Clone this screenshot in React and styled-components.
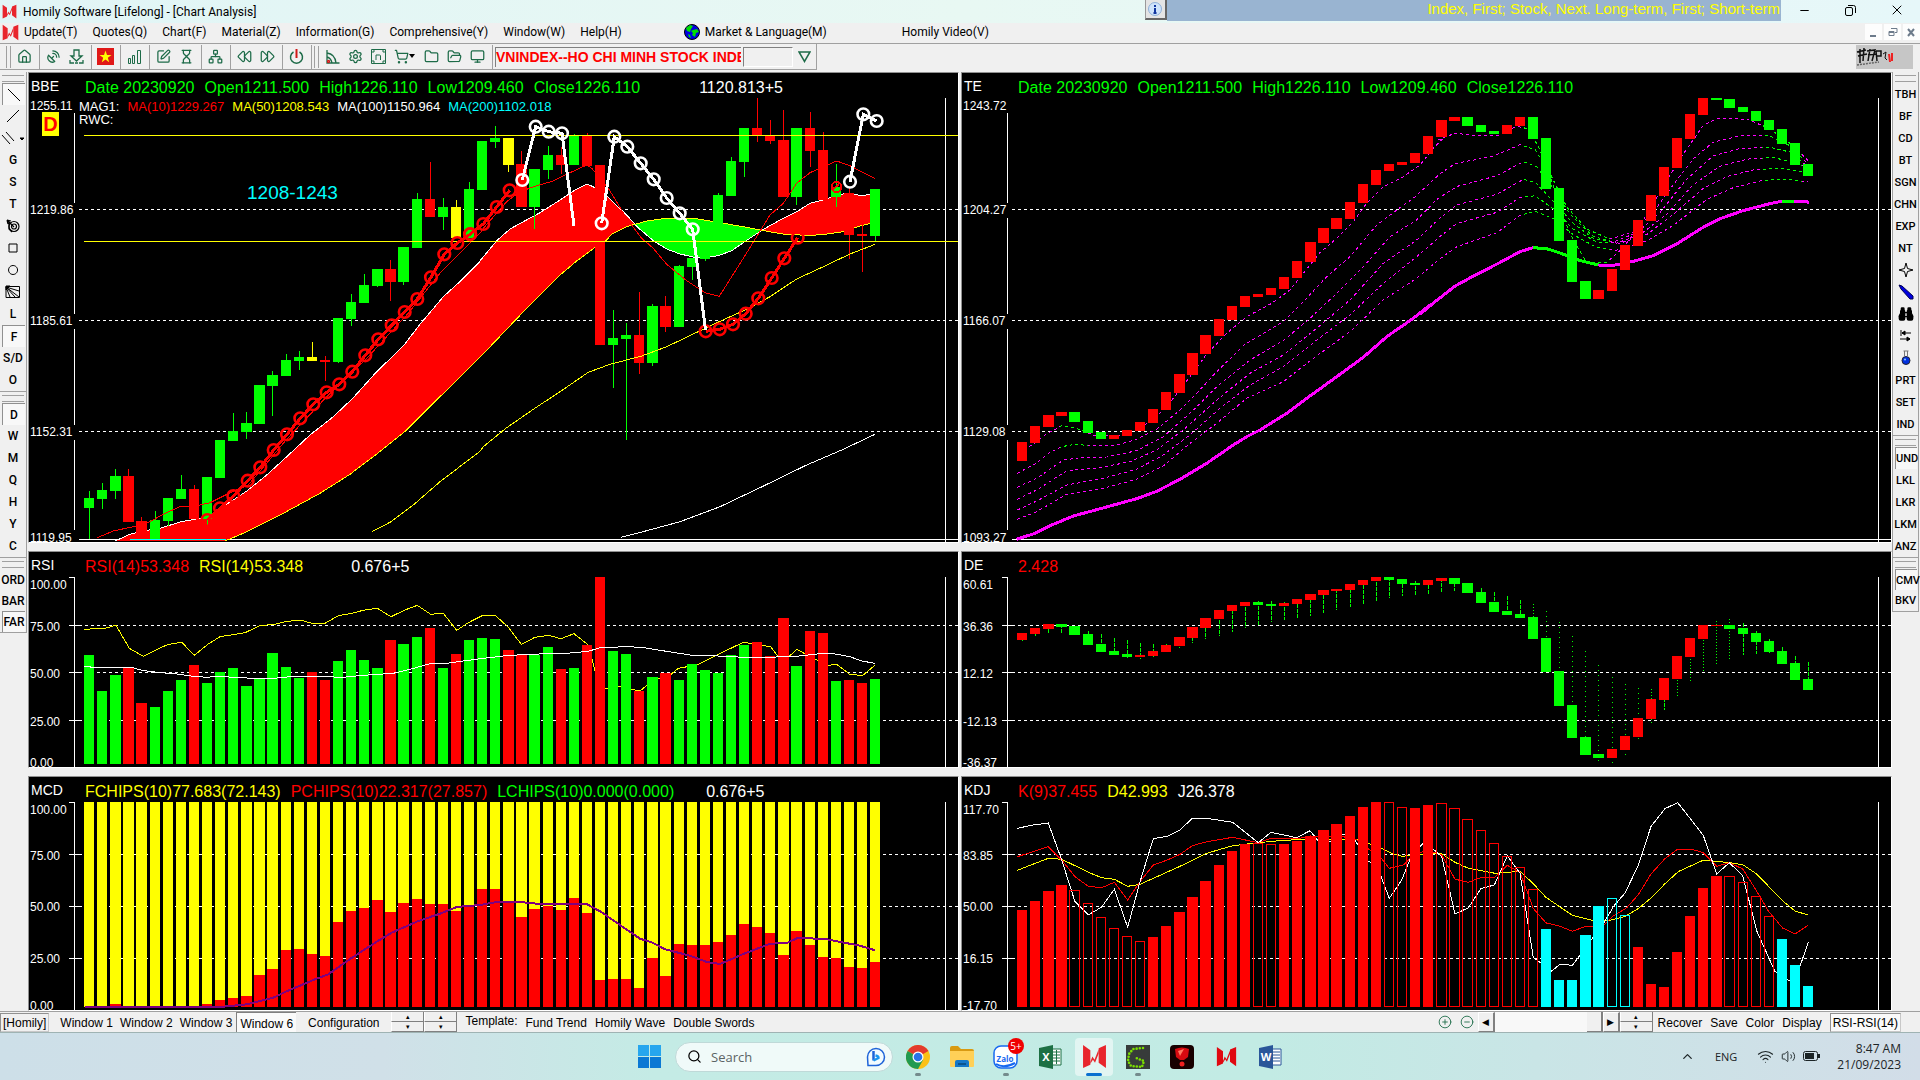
import styled, { createGlobalStyle, css } from 'styled-components';
import {
  Home,
  SatelliteDish,
  SquarePen,
  Hourglass,
  Network,
  Rewind,
  FastForward,
  Settings,
  ShoppingCart,
  Folder,
  FolderOpen,
  Monitor,
  CirclePlus,
  CircleMinus,
  ChevronUp,
  Wifi,
  Volume2,
  Search,
  Minus,
  X,
  Binoculars,
} from 'lucide-react';

const RED = '#ff0000';
const GREEN = '#00ff00';
const YELLOW = '#ffff00';
const CYAN = '#00ffff';
const MAGENTA = '#ff00ff';
const ICON = '#1d6b48';

const ARIAL = "'Liberation Sans', Arial, sans-serif";
const UI = "Roboto, 'Segoe UI', sans-serif";

const GlobalStyle = createGlobalStyle`
  * {
    box-sizing: border-box;
  }
  body {
    margin: 0;
    background: #f0f0f0;
    font-family: ${ARIAL};
    font-size: 12px;
    color: #000;
    overflow: hidden;
  }
  button, input {
    font: inherit;
    color: inherit;
    border: none;
    border-radius: 0;
    background: none;
    padding: 0;
    margin: 0;
    outline: none;
  }
`;

/* ---------- shell ---------- */

const Shell = styled.div`
  display: flex;
  flex-direction: column;
  height: 100vh;
`;

const TitleBar = styled.header`
  display: flex;
  height: 23px;
  flex: none;
  align-items: flex-start;
  background: linear-gradient(90deg, #e1f5f6, #e8f8f3 50%, #e6f7f9);
  font-family: ${UI};
`;

const TitleText = styled.div`
  display: flex;
  align-items: center;
  gap: 6px;
  height: 23px;
  padding-left: 2px;
  flex: 1;
`;

const InfoButton = styled.button`
  display: grid;
  place-items: center;
  width: 22px;
  height: 20px;
  background: #e4e4e4;
  border-right: 2px solid #666;
  border-bottom: 2px solid #666;
  border-left: 1px solid #999;
`;

const Ticker = styled.div`
  width: 32%;
  height: 21px;
  line-height: 17px;
  text-align: right;
  background: #99b4d1;
  color: ${YELLOW};
  font-family: ${ARIAL};
  font-size: 15px;
  padding-right: 1px;
  white-space: nowrap;
`;

const WindowButtons = styled.div`
  display: flex;
  width: 139px;
  height: 20px;
`;

const WindowButton = styled.button`
  flex: 1;
  display: grid;
  place-items: center;
`;

const MenuBar = styled.nav`
  display: flex;
  align-items: center;
  gap: 15px;
  height: 21px;
  flex: none;
  padding: 0 0 2px 2px;
  border-bottom: 1px solid #a0a0a0;
  font-family: ${UI};
`;

const MenuItem = styled.button`
  display: flex;
  align-items: center;
  gap: 5px;
  height: 18px;
  margin-left: ${({ $space }) => $space || 0}px;
  white-space: nowrap;
`;

const MdiButtons = styled.div`
  display: flex;
  gap: 2px;
  margin-left: auto;
`;

const MdiButton = styled.button`
  width: 17px;
  height: 16px;
  display: grid;
  place-items: center;
  background: #fdfdfd;
  color: #6d7b8b;
`;

/* ---------- top tool bar ---------- */

const ToolRow = styled.div`
  display: flex;
  justify-content: space-between;
  height: 28px;
  flex: none;
  padding-right: 7px;
`;

const ToolBar = styled.div`
  display: flex;
  align-items: center;
  height: 26px;
  padding-left: 6px;
  border-right: 1px solid #a0a0a0;
  border-bottom: 1px solid #a0a0a0;
  color: ${ICON};
`;

const Grip = styled.span`
  width: 5px;
  height: 22px;
  margin-right: 2px;
  border-left: 1px solid #a0a0a0;
  border-right: 1px solid #a0a0a0;
`;

const Divider = styled.span`
  width: 1px;
  height: 24px;
  margin: 0 2px 0 3px;
  background: #a0a0a0;
`;

const Tool = styled.button`
  display: flex;
  align-items: center;
  justify-content: center;
  width: ${({ $wide }) => ($wide ? 30 : 23)}px;
  height: 22px;
`;

const SymbolInput = styled.input`
  width: 246px;
  height: 20px;
  border-left: 1px solid #808080;
  border-top: 1px solid #808080;
  color: ${RED};
  font-size: 14px;
  font-weight: 700;
`;

const CodeInput = styled.input`
  width: 50px;
  height: 20px;
  margin-left: 2px;
  border: 1px solid #fff;
  border-left-color: #808080;
  border-top-color: #808080;
`;

const Brand = styled.svg`
  width: 57px;
  height: 24px;
  margin-top: 1px;
  background: #c6c6c6;
`;

/* ---------- side tool bars ---------- */

const Workspace = styled.main`
  display: grid;
  grid-template-columns: 28px 1fr 28px;
  flex: 1;
  min-height: 0;
`;

const Side = styled.aside`
  display: flex;
  flex-direction: column;
  padding-right: 1px;
  font-family: ${UI};
  font-weight: 500;
  font-size: ${({ $size }) => $size}px;
  overflow: hidden;
`;

const SideButton = styled.button`
  display: grid;
  place-items: center;
  width: 100%;
  height: 22px;
  white-space: nowrap;
  ${({ $on }) =>
    $on &&
    css`
      margin-left: 2px;
      width: calc(100% - 3px);
      background: #f8f8f8;
      border-left: 1px solid #909090;
      border-top: 1px solid #909090;
    `}
`;

const SideGroup = styled.div`
  padding-top: 3px;
  border-right: 1px solid #a0a0a0;
  border-bottom: 1px solid #a0a0a0;
  border-left: ${({ $left }) => ($left ? '1px solid #a0a0a0' : 'none')};

  &::before {
    content: '';
    display: block;
    height: 5px;
    margin: 0 2px 1px;
    border-top: 1px solid #a0a0a0;
    border-bottom: 1px solid #a0a0a0;
  }

  &:last-child ${SideButton} {
    height: 21px;
  }
`;

/* ---------- chart panes ---------- */

const Panes = styled.div`
  display: grid;
  grid-template-columns: 1fr 1fr;
  grid-template-rows: 471fr 217fr 235fr;
  gap: 8px 2px;
  min-width: 0;
  min-height: 0;
`;

const PaneBox = styled.section`
  position: relative;
  overflow: hidden;
  min-height: 0;
  background: #000;
  border: 1px solid #fff;
  border-top-color: #909090;
  border-left-color: #909090;
  color: #fff;
`;

const Plot = styled.svg`
  position: absolute;
  inset: 0;
  width: 100%;
  height: 100%;
`;

const PaneHead = styled.div`
  position: relative;
  display: flex;
  align-items: center;
  gap: 10px;
  height: 30px;
  margin-bottom: -3px;
  padding-left: 2px;
  font-size: 16px;
  white-space: nowrap;
`;

const PaneName = styled.h2`
  width: 44px;
  margin: 0;
  padding-bottom: 4px;
  font-size: 14px;
  font-weight: 400;
`;

const Reading = styled.span`
  color: ${({ $color }) => $color || '#fff'};
  margin-left: ${({ $space }) => $space || 0}px;
`;

const SubHead = styled.div`
  position: relative;
  display: flex;
  gap: 8px;
  height: 13px;
  line-height: 13px;
  padding-left: 50px;
  font-size: 13px;
  white-space: nowrap;
`;

const Axis = styled.div`
  position: absolute;
  top: 0;
  bottom: 0;
  left: 1px;
  display: grid;
  grid-template-rows: ${({ $rows }) => $rows} 11px;
  padding-top: 26px;
  font-size: 12px;
  line-height: 14px;
`;

const PeriodBadge = styled.span`
  position: absolute;
  left: 13px;
  top: 39px;
  width: 17px;
  height: 24px;
  line-height: 24px;
  text-align: center;
  background: ${YELLOW};
  color: ${RED};
  font-size: 20px;
  font-weight: 700;
`;

const RangeNote = styled.span`
  position: absolute;
  left: 218px;
  top: 109px;
  color: ${CYAN};
  font-size: 19px;
  line-height: 22px;
`;

const AXIS_ROWS = {
  469: '104fr 111fr 111fr 106fr',
  215: '42fr 47fr 48fr 41fr',
  233: '46fr 51fr 52fr 47fr',
};

const GRID = {
  469: [136, 247, 358],
  215: [73, 120, 168],
  233: [77, 129, 181],
};

/* ---------- plot helpers ---------- */

// bars are spaced 13.1px apart and snapped to whole pixels
const left = (i) => Math.round(55 + 13.1 * i);
const width = (i) => Math.round(65.3 + 13.1 * i) - left(i);
const middle = (i) => left(i) + 5;

// each part: x shift, y shift, y divisor, 'x,y x,y ...'
const trace = (parts) =>
  parts
    .flatMap(([dx, dy, k, text]) =>
      text.split(' ').map((p) => {
        const [x, y] = p.split(',').map(Number);
        return `${(x / 3 + dx).toFixed(1)},${(y / k + dy).toFixed(1)}`;
      })
    )
    .join(' ');

// 'color top bottom high low'
const parseCandles = (dy, k, text) =>
  text.split('|').map((row) => {
    const [c, ...n] = row.split(' ');
    const [top, bottom, high = top, low = bottom] = n.map(Number);
    return [c, top, bottom, high, low].map((v, i) =>
      i ? Math.round(v / k + dy) : v
    );
  });

const TONE = { r: RED, g: GREEN, y: YELLOW };

const Candles = ({ rows, stem }) =>
  rows.map(([c, top, bottom, high, low], i) => (
    <g key={i} fill={TONE[c]}>
      {stem ? (
        <line
          x1={middle(i) + 0.5}
          x2={middle(i) + 0.5}
          y1={high}
          y2={low}
          stroke={GREEN}
          strokeDasharray={low - high > 50 ? '1 4' : low - high > 32 ? '1 2' : '4 1'}
        />
      ) : (
        <rect x={middle(i)} width='1' y={high} height={low - high} />
      )}
      <rect x={left(i)} width={width(i)} y={top} height={Math.max(1, bottom - top)} />
    </g>
  ));

const Line = ({ points, color, w = 1, dash }) => (
  <polyline
    points={points}
    fill='none'
    stroke={color}
    strokeWidth={w}
    strokeDasharray={dash}
  />
);

const Frame = ({ h }) => (
  <g stroke='#fff' fill='none'>
    {GRID[h].map((y) => (
      <g key={y}>
        <line x1='50' x2='929' y1={y + 0.5} y2={y + 0.5} strokeDasharray='3 3' />
        {h !== 469 && <line x1='40' x2='50' y1={y + 0.5} y2={y + 0.5} />}
      </g>
    ))}
    {h === 469 ? (
      <>
        <path d='M45.5 40V130M45.5 145V241M45.5 256V352M45.5 367V457' />
        <path d='M50 466.5H929' />
      </>
    ) : (
      <path d={`M40 25.5H45.5V${h}`} />
    )}
    <path d={`M916.5 25V${h}`} />
  </g>
);

const Pane = ({ name, h, ticks, head, sub, children, overlay }) => (
  <PaneBox aria-label={name}>
    <Plot
      viewBox={`0 0 929 ${h}`}
      preserveAspectRatio='none'
      shapeRendering='crispEdges'
    >
      <Frame h={h} />
      {children}
    </Plot>
    <PaneHead>
      <PaneName>{name}</PaneName>
      {head.map(([text, color, space]) => (
        <Reading key={text + color} $color={color} $space={space}>
          {text}
        </Reading>
      ))}
    </PaneHead>
    {sub}
    <Axis $rows={AXIS_ROWS[h]}>
      {ticks.map((t) => (
        <span key={t}>{t}</span>
      ))}
    </Axis>
    {overlay}
  </PaneBox>
);

/* ---------- BBE data ---------- */

const bbeCandles = [
  ...parseCandles(
    -13,
    3,
    'g 1313 1344 1292 1437|g 1290 1316 1269 1347|g 1248 1293 1227 1316|r 1248 1386 1227 1386|r 1383 1437 1371|g 1380 1438 1353|g 1314 1383 1314 1398|g 1287 1316 1245|r 1287 1377 1275|g 1251 1377 1251 1400|g 1140 1254|g 1113 1143 1059|g 1089 1116 1056 1137|g 975 1092|g 945 978 933 1068|g 900 948 882|g 891 903 873 930|y 891 903 846|r 900 906 888 963|g 774 906 774 909|g 726 777 702 798|g 675 729 642|g 627 678 627 681|r 627 666 600 723|g 561 666 561 675|g 417 564 399|r 417 471 306|g 441 471 414 510|y 441 534 420'
  ),
  ...parseCandles(
    -3,
    3,
    'g 357 504 336|g 213 360|g 204 216 168 234|y 204 285 204 306|r 282 411 243|g 297 411 297 477|g 255 300 228 327|r 255 285 231 312|g 195 285 192|r 195 288 189|r 285 825|g 804 825 720 954|g 795 807 759 1110|r 795 879 666 912|g 708 879 702 888|r 708 771 678 786|g 588 771 585|g 564 591 564 630|g 460 567 460 572|g 375 462 369|g 273 378 261|g 174 276 174 321|r 174 195 84 216|r 195 213 150 222|r 210 381 120|g 174 381 174 405|r 174 243 126 291|r 240 390 186|g 350 381 282 411|r 370 495 350 567|r 492 498 465 606|g 357 498 357 513'
  ),
];

const fastEdge =
  '345,1443 385,1425 420,1414 480,1405 540,1386 600,1375 630,1365 680,1333 740,1293 800,1245 860,1190 930,1125 1000,1070 1060,1013 1130,935 1210,858 1260,793 1330,710 1385,660 1440,605';
const slowEdge =
  '675,1443 730,1420 850,1360 960,1300 1050,1243 1130,1182 1220,1110 1320,1010 1440,892';
const fastRise =
  '40,597 110,512 150,477 190,455 240,428 300,390 345,360 382,342 405,353 440,378 500,435 525,463';
const slowRise =
  '100,820 200,715 300,615 350,573 405,532 440,510 455,492 500,470 525,463';
const fastDip =
  '525,463 540,478 580,512 620,537 660,552 700,561 730,564 775,557 815,542 850,518 905,481';
const slowDip =
  '525,463 560,453 620,445 700,445 780,458 850,470 905,481';
const fastEnd =
  '905,481 960,450 1010,425 1050,400 1090,390 1130,375 1165,370 1200,376 1240,374';
const slowEnd =
  '905,481 980,494 1060,496 1100,492 1150,485 1200,468 1240,458';

const backwards = (text) => text.split(' ').reverse().join(' ');

const band = (top, low) =>
  `${trace(top)} ${backwards(trace(low))}`;

const sarRise = trace([
  [-29, -13, 3, '622,1380 660,1345 700,1308 743,1262 781,1222 821,1170 861,1123 901,1075 940,1033 980,997 1018,973 1057,935 1096,886 1135,838 1175,796 1214,756 1252,717 1293,652 1333,583 1372,549 1410,523'],
  [431, -3, 3, '31,492 70,462 110,411 149,361'],
]);
const sarTop = trace([[431, -3, 3, '187,330 227,170 266,185 306,190']]);
const sarFall = trace([
  [431, -3, 3, '425,460 463,200 502,230 542,280 581,328 620,384 659,430 698,478'],
]);
const sarTurn = trace([
  [431, -3, 3, '737,784 779,778 819,763 857,731 895,685 935,624 973,565 1013,503'],
]);
const sarLast = trace([[431, -3, 3, '1170,335 1210,133 1250,153']]);

const Dots = ({ points, color, tail }) => (
  <g stroke={color} fill='none'>
    <polyline points={tail ? `${points} ${tail}` : points} strokeWidth='3' />
    {points.split(' ').map((p) => {
      const [cx, cy] = p.split(',');
      return (
        <circle
          key={p}
          cx={cx}
          cy={cy}
          r='5.8'
          strokeWidth='2.6'
          shapeRendering='auto'
        />
      );
    })}
  </g>
);

const BbePlot = () => (
  <>
    <polygon
      fill={RED}
      points={band(
        [[-29, -13, 3, fastEdge], [431, -3, 3, fastRise]],
        [[-29, -13, 3, slowEdge], [431, -3, 3, slowRise]]
      )}
    />
    <polygon fill={GREEN} points={band([[431, -3, 3, fastDip]], [[431, -3, 3, slowDip]])} />
    <polygon fill={RED} points={band([[431, -3, 3, fastEnd]], [[431, -3, 3, slowEnd]])} />
    <Line
      color='#fff'
      points={trace([
        [-29, -13, 3, fastEdge],
        [431, -3, 3, fastRise],
        [431, -3, 3, fastDip],
        [431, -3, 3, fastEnd],
      ])}
    />
    <Line
      color={YELLOW}
      points={trace([
        [-29, -13, 3, slowEdge],
        [431, -3, 3, slowRise],
        [431, -3, 3, slowDip],
        [431, -3, 3, slowEnd],
      ])}
    />
    <Candles rows={bbeCandles} />
    <Line
      color={RED}
      points={trace([
        [-29, -13, 3, '292,1433 340,1413 400,1400 450,1385 495,1360 540,1340 590,1337 630,1328 690,1298 745,1275 860,1138 980,1010 1100,895 1220,765 1320,640 1440,520'],
        [431, -3, 3, '70,475 140,395 180,365 230,347 280,333 330,308 380,285 395,295 445,355 500,445 545,505 580,535 620,583 680,632 735,668 778,679 850,565 930,435 970,400 1010,340 1050,308 1090,290 1130,273 1170,287 1245,326'],
      ])}
    />
    <Line
      color={YELLOW}
      points={trace([
        [-29, -13, 3, '1117,1414 1170,1387 1240,1335 1320,1265 1390,1212 1440,1174'],
        [431, -3, 3, '70,1130 140,1073 220,1018 300,965 385,907 450,883 545,858 620,830 700,792 780,754 860,718 930,680 1010,627 1090,590 1170,552 1245,523'],
      ])}
    />
    <Line
      color='#fff'
      points={trace([
        [431, -3, 3, '484,1402 560,1382 660,1355 780,1310 900,1253 1040,1185 1150,1138 1245,1093'],
      ])}
    />
    <path d='M55 62.5H929M55 168.5H929' stroke={YELLOW} />
    <path d='M101 466.5H197' stroke={CYAN} />
    <Dots points={sarRise} color={RED} />
    <Dots points={sarTurn} color={RED} />
    <circle cx='807.5' cy='114' r='5' stroke={RED} strokeWidth='2' fill='none' />
    <path d='M803 117l7-6' stroke={RED} strokeWidth='2' />
    <Dots points={sarTop} color='#fff' tail='545,153' />
    <Dots points={sarFall} color='#fff' tail='676.5,257' />
    <Dots points={sarLast} color='#fff' />
  </>
);

/* ---------- RSI and MCD data ---------- */

const rsiBars =
  'g345 g453 g405 r384 r489 g501 g453 g420 r375 g429 g396 g384 g438 g414 g339 g381 g414 r396 r420 g363 g330 g360 g384 r300 g312 g291 r264 g384 r342 g300 g294 g297 r330 r345 g345 g321 r387 g384 r315 r111 g333 g342 r453 g411 r399 g420 g372 g390 g399 g345 g315 r306 r348 r234 g378 r273 r279 g423 r420 r429 g417'.split(
    ' '
  );

const RsiPlot = () => (
  <>
    <Line
      color={YELLOW}
      points={trace([
        [-29, -12, 3, '252,268 315,265 348,256 388,325 430,349 468,330 502,314 545,307 583,346 625,312 660,290 735,278 780,257 825,253 855,245 900,240 935,250 975,250 1015,227 1055,220 1090,211 1132,205 1173,230 1215,210 1252,196 1292,223 1330,220 1370,271 1405,248 1440,230'],
        [431, -12, 3, '66,227 107,227 145,262 184,313 225,292 265,286 303,296 342,281 385,315 404,390 436,445 480,440 540,453 580,420 625,410 655,385 710,375 775,343 850,307 932,320 955,350 985,352 1010,328 1060,355 1105,376 1130,373 1168,402 1207,407 1245,376'],
      ])}
    />
    {rsiBars.map((b, i) => {
      const y = Math.round(b.slice(1) / 3 - 12);
      return (
        <rect key={i} x={left(i)} width={width(i)} y={y} height={212 - y} fill={TONE[b[0]]} />
      );
    })}
    <Line
      color='#fff'
      points={trace([
        [-29, -12, 3, '252,380 290,382 395,382 425,391 470,397 530,402 580,409 620,412 650,409 740,414 830,414 885,409 940,409 1030,412 1090,406 1180,400 1245,384 1290,371 1340,370 1440,356'],
        [431, -12, 3, '130,348 200,343 320,340 385,334 420,323 500,320 545,322 600,331 690,345 800,349 850,352 920,352 1010,349 1090,340 1125,342 1170,350 1205,363 1245,370'],
      ])}
    />
  </>
);

const chips = [
  1401, 1401, 1392, 1401, 1401, 1401, 1401, 1401, 1401, 1392, 1380, 1374, 1368,
  1305, 1287, 1230, 1227, 1242, 1248, 1146, 1113, 1104, 1080, 1116, 1089, 1077,
  1092, 1092, 1113, 1095, 1047, 1047, 1088, 1131, 1107, 1098, 1110, 1074, 1119,
  1320, 1317, 1317, 1344, 1254, 1308, 1212, 1215, 1215, 1206, 1185, 1152, 1161,
  1179, 1245, 1173, 1215, 1251, 1254, 1281, 1284, 1266,
];

const McdPlot = () => (
  <>
    {chips.map((v, i) => {
      const y = Math.round(v / 3 - 237);
      return (
        <g key={i}>
          <rect x={left(i)} width={width(i)} y='25' height={y - 25} fill={YELLOW} />
          <rect x={left(i)} width={width(i)} y={y} height={230 - y} fill={RED} />
        </g>
      );
    })}
    <Line
      color='#800080'
      w={2}
      points={trace([
        [-29, -237, 3, '255,1401 660,1401 740,1393 820,1373 860,1354 940,1320 985,1303 1050,1257 1130,1205 1175,1178 1255,1143 1320,1121 1370,1101 1440,1095'],
        [431, -237, 3, '110,1086 180,1086 240,1092 380,1092 425,1117 490,1162 540,1196 575,1207 615,1228 690,1247 740,1266 780,1272 850,1242 930,1211 980,1209 1015,1193 1100,1198 1200,1217 1245,1231'],
      ])}
    />
  </>
);

/* ---------- TE data ---------- */

const teCandles = [
  ...parseCandles(
    -3,
    3,
    'r 1116 1173|r 1068 1119|r 1035 1071|r 1026 1038|g 1026 1056|g 1053 1089|g 1086 1107|r 1095 1107|r 1080 1098|r 1056 1083|r 1017 1059|r 966 1020|r 912 969|r 849 915|r 795 852|r 747 798|r 708 750|r 678 711|r 672 681|r 654 675|r 621 657|r 573 624|r 516 576|r 474 519|r 444 477|r 396 447|r 342 399|r 300 345|r 282 303|r 276 285|r 249 279|r 198 252|r 150 201'
  ),
  ...parseCandles(
    -3,
    2.703,
    'r 127 138|g 127 151|g 149 167|g 165 173|r 149 173|r 127 151|g 127 187|g 184 322|g 319 462|g 460 573|g 570 619|r 595 619|r 538 597|r 474 541|r 406 475|r 338 408|r 262 341|r 184 265|r 119 187|r 76 122|g 76 81|g 78 103|g 100 114|g 111 138|g 135 161|g 160 199|g 197 257|g 254 287'
  ),
];

const teLadder = [
  [
    '238,1130 290,1092 335,1067 375,1073 430,1095 500,1098 560,1080 620,1040 670,985 720,920 770,852 830,790 890,740 965,700 1020,660 1080,585 1110,548 1160,505 1210,455 1250,400 1300,350 1360,320 1410,285 1450,235 1480,205',
    '50,190 105,171 180,178 235,178 290,152 320,158 355,205 395,300 430,400 460,460 500,520 560,520 610,480 660,420 720,330 780,240 850,150 890,131 980,133 1040,155 1100,190 1165,245',
  ],
  [
    '202,1210 255,1182 300,1147 335,1130 375,1123 430,1128 500,1125 560,1108 620,1078 690,1020 740,970 800,905 885,823 1000,755 1060,695 1130,620 1200,560 1280,465 1340,420 1390,385 1450,330',
    '60,280 105,253 220,233 300,202 345,215 390,280 440,370 500,430 570,457 640,438 700,385 760,310 820,240 880,195 960,178 1050,178 1110,205 1165,255',
  ],
  [
    '202,1252 260,1225 340,1170 400,1162 470,1161 560,1142 640,1100 720,1030 800,950 900,870 1000,812 1080,745 1160,670 1240,590 1320,500 1400,450',
    '50,350 110,315 230,286 310,248 350,262 400,320 450,390 520,450 580,465 650,440 720,385 800,295 880,232 960,212 1050,209 1110,222 1165,262',
  ],
  [
    '202,1288 260,1260 350,1202 450,1193 540,1175 620,1140 700,1080 800,990 900,910 1000,855 1100,775 1200,690 1300,580 1400,510',
    '60,400 110,365 230,336 310,296 345,303 400,355 460,415 520,455 590,468 660,445 740,390 820,310 900,260 980,241 1060,236 1165,262',
  ],
  [
    '202,1320 260,1293 350,1245 460,1225 560,1198 640,1155 720,1095 810,1015 900,945 1000,890 1100,810 1200,735 1300,640 1400,560',
    '60,450 110,415 230,385 300,345 345,340 400,375 460,430 530,465 600,468 680,445 760,390 850,320 920,288 1000,270 1080,266 1165,278',
  ],
  [
    '202,1348 260,1325 350,1273 460,1255 560,1228 640,1188 720,1120 800,1060 890,985 1000,935 1090,865 1200,785 1300,690 1400,625',
    '60,510 110,478 230,440 300,393 345,382 400,402 460,445 530,480 590,487 680,462 760,420 860,350 940,318 1030,298 1110,296 1165,303',
  ],
].map(([a, b]) => trace([[-12, -3, 3, a], [458, -3, 2.703, b]]));

const TePlot = () => (
  <>
    <clipPath id='falling'>
      <rect x='560' y='0' width='88' height='400' />
      <rect x='800' y='0' width='40' height='400' />
    </clipPath>
    <clipPath id='dip'>
      <rect x='98' y='0' width='28' height='400' />
    </clipPath>
    {teLadder.map((p) => (
      <Line key={p} points={p} color={MAGENTA} dash='3 3' />
    ))}
    <g clipPath='url(#falling)'>
      {teLadder.map((p) => (
        <Line key={p} points={p} color='#000' />
      ))}
      {teLadder.map((p) => (
        <Line key={p} points={p} color={GREEN} dash='3 3' />
      ))}
    </g>
    <g clipPath='url(#dip)'>
      {teLadder.slice(0, 2).map((p) => (
        <Line key={p} points={p} color='#000' />
      ))}
      {teLadder.slice(0, 2).map((p) => (
        <Line key={p} points={p} color={GREEN} dash='3 3' />
      ))}
    </g>
    <Line
      color={MAGENTA}
      w={3}
      points={trace([
        [-12, -3, 3, '200,1408 255,1390 300,1367 370,1338 455,1315 560,1286 620,1264 690,1228 770,1180 850,1125 890,1100 930,1080 1010,1030 1080,978 1160,920 1240,862 1310,800 1390,745 1440,705'],
        [458, -3, 2.703, '0,660 40,630 105,584 160,557 230,525 300,491 340,480'],
      ])}
    />
    <Line
      color={GREEN}
      w={3}
      points={trace([[458, -3, 2.703, '340,480 385,484 430,498 480,515 535,527']])}
    />
    <Line
      color={MAGENTA}
      w={3}
      points={trace([
        [458, -3, 2.703, '535,527 580,528 640,517 700,502 770,470 850,425 900,402 970,380 1050,361 1085,355 1122,355 1168,357'],
      ])}
    />
    <Line color={GREEN} w={3} points={trace([[458, -3, 2.703, '1085,355 1122,355']])} />
    <Candles rows={teCandles} />
  </>
);

/* ---------- DE and KDJ data ---------- */

const deCandles = [
  ...parseCandles(
    -7,
    3,
    'r 264 285 264 288|r 249 267 249 273|r 237 252 252 267|g 237 246 237 264|g 243 270|g 267 300 258|g 297 321 267|g 318 330 279|g 327 336 285 339|r 330 336 294 342|r 318 333 297 336|r 300 321 297|r 276 303 276 309|r 246 279 246 294|r 219 249 219 282|r 195 222 195 273|r 180 198 180 261|r 171 183 171 249|g 171 180 168 240|g 177 182 168 231|r 174 183 171 225|r 162 177 162 219|r 147 165 147 213|r 135 150 135 204|r 132 138 132 195|r 117 135 117 186|r 105 120 105 177|r 96 108 96 168|g 96 105 96 159|g 102 117 102 153|g 114 120 108 150|r 105 120 105 147|r 99 108 99 141'
  ),
  ...parseCandles(
    -12,
    2.904,
    'g 110 128 110 148|g 125 154|g 151 183 139|g 180 209 151|g 206 218 163|g 215 226 174|g 224 287 186|g 285 383 206|g 380 482 238|g 479 575 279|g 572 624 322|g 621 633 363 648|r 607 633 398 653|r 569 610 418 628|r 517 572 430 580|r 462 520 433 534|r 401 465 401 494|r 337 404 337 453|r 285 340 285 415|r 248 287 248 383|r 247 250 235 360|g 248 258 229 346|g 256 273 240 333|g 270 296 264 330|g 293 325 288 330|g 322 360 311|g 357 407 337|g 404 436 354'
  ),
];

// f filled, o outlined, c cyan filled, d cyan outlined
const kdjBars = [
  ...'f1095 f1068 f1038 f1020 o1036 o1075 o1117 o1150 o1174 o1189 f1176 f1143 f1101 f1056 f1008 f960 f918 f897 o895 o898 f897 f888 f873 f855 f837 f813 f786 f771 o772 o787 f789 f780 o775'
    .split(' ')
    .map((b) => [b[0], Math.round(b.slice(1) / 3 - 232)]),
  ...'o779 o811 o843 o881 o919 o951 o1014 c1130 c1278 c1278 c1147 c1063 d1041 d1090 f1182 f1289 f1298 f1196 f1092 f1010 f976 o977 o994 o1035 o1093 c1159 c1234 c1295'
    .split(' ')
    .map((b) => [b[0], Math.round(b.slice(1) / 2.904 - 237)]),
];

const KdjPlot = () => (
  <>
    <Line
      color={YELLOW}
      points={trace([
        [-12, -232, 3, '202,976 295,940 335,943 375,962 415,982 455,998 493,1003 533,1024 570,1018 610,1000 690,964 770,925 848,902 925,893 1000,886 1080,883 1220,884 1260,897 1300,912 1320,923 1355,934 1420,928 1475,926'],
        [458, -237, 2.904, '105,936 145,953 225,968 300,962 340,998 378,1038 457,1090 515,1104 570,1104 615,1093 655,1070 693,1040 735,998 775,963 850,930 930,937 968,943 1010,970 1050,1010 1088,1048 1126,1078 1165,1089'],
      ])}
    />
    <Line
      color={RED}
      points={trace([
        [-12, -232, 3, '202,935 295,905 335,945 375,995 415,1024 455,1028 493,1012 533,1065 570,1010 610,960 652,945 690,928 727,902 770,890 848,877 925,893 963,880 1040,882 1080,873 1180,875 1220,885 1260,915 1290,935 1318,970 1360,960 1385,935 1430,915 1475,930'],
        [458, -237, 2.904, '105,985 145,994 183,980 223,980 262,945 300,965 340,1070 378,1112 415,1120 457,1136 495,1123 550,1120 580,1092 620,1068 655,1030 693,970 735,925 773,898 815,898 850,908 890,948 928,937 968,955 1010,1020 1045,1077 1088,1127 1126,1144 1165,1118'],
      ])}
    />
    <Line
      color='#fff'
      points={trace([
        [-12, -232, 3, '202,850 250,840 295,834 335,945 375,1070 415,1110 455,1086 493,1033 533,1147 570,1010 610,881 652,874 690,855 727,820 770,820 848,832 925,893 963,862 1040,878 1080,857 1105,888 1140,890 1180,868 1215,885 1250,947 1280,960 1318,1060 1355,1005 1385,930 1425,890 1475,935'],
        [458, -237, 2.904, '105,1086 145,1068 183,1012 223,1002 262,917 300,968 340,1212 395,1252 420,1232 457,1235 515,1160 550,1115 580,1065 615,1025 655,945 693,832 735,780 773,763 810,808 850,858 890,970 928,937 968,975 1010,1135 1065,1253 1108,1280 1140,1238 1165,1168'],
      ])}
    />
    {kdjBars.map(([kind, y], i) => {
      const color = 'cd'.includes(kind) ? CYAN : RED;
      return 'fc'.includes(kind) ? (
        <rect key={i} x={left(i)} width={width(i)} y={y} height={230 - y} fill={color} />
      ) : (
        <rect
          key={i}
          x={left(i) + 0.5}
          width={width(i) - 1}
          y={y + 0.5}
          height={229 - y}
          fill='none'
          stroke={color}
        />
      );
    })}
  </>
);

/* ---------- drawings ---------- */

const HomilyMark = ({ size = 17, color = '#e8252c' }) => (
  <svg width={size} height={size} viewBox='0 0 24 24' fill={color}>
    <path d='M1 1l7 5v14l-7 3z' />
    <path d='M23 1l-7 3v14l7 5z' />
    <path d='M8 17l2-5 2 3 4-10v4l-3.500 9-2-3-2.500 4z' />
  </svg>
);

const Globe = () => (
  <svg width='16' height='16' viewBox='0 0 16 16'>
    <circle cx='8' cy='8' r='7.5' fill='#0000e0' stroke='#000' />
    <path d='M2 4l4-3 3 1-2 3-1 3-3-1zM9 6l4-1 2 3-3 1-1 4-3-2 1-2-2-2zM4 10l2 1 1 3-2-1z' fill='#00e000' />
  </svg>
);

const Flag = () => (
  <svg width='17' height='17' viewBox='0 0 17 17'>
    <rect width='17' height='17' fill='#e01818' />
    <path d='M8.500 2.500l1.500 4.500h4.500l-3.700 2.700 1.400 4.500-3.700-2.800-3.700 2.800 1.400-4.500-3.700-2.700h4.500z' fill='#ff0' />
  </svg>
);

const DownloadIcon = () => (
  <svg width='15' height='15' viewBox='0 0 15 15' fill='none' stroke='currentColor' strokeWidth='1.3'>
    <path d='M5 1h5v6h3l-5.500 5L2 7h3zM1 11v3h4M14 11v3h-4M6 14h3' />
  </svg>
);

const BarsIcon = () => (
  <svg width='14' height='15' viewBox='0 0 14 15' fill='none' stroke='currentColor'>
    <path d='M.5 9.500h2v5h-2zM4.500 6.500h2v8h-2zM9.500 1.500h3v13h-3z' />
  </svg>
);

const PowerIcon = () => (
  <svg width='15' height='15' viewBox='0 0 15 15' fill='none' strokeWidth='1.5'>
    <path d='M4.500 3a6 6 0 1 0 6 0' stroke='currentColor' />
    <path d='M7.500 0v9' stroke='#d01818' strokeWidth='2' />
  </svg>
);

const SignalIcon = () => (
  <svg width='14' height='15' viewBox='0 0 14 15' fill='none' stroke='currentColor' strokeWidth='1.3'>
    <path d='M1 1v13h12.500M1 4q8 1 9 10M1 8q4 1 5 6' />
    <circle cx='2.500' cy='12.500' r='1' stroke='#d01818' />
  </svg>
);

const FrameN = () => (
  <svg width='15' height='15' viewBox='0 0 15 15' fill='none' stroke='currentColor'>
    <path d='M.5.5h14v14h-14zM5 11V6h3.500q1 0 1 1v4' />
    <path d='M2 4V2h2M11 2h2v2M2 11v2h2M13 11v2h-2' />
  </svg>
);

const DownTriangle = () => (
  <svg width='13' height='13' viewBox='0 0 13 13' fill='none' stroke='currentColor' strokeWidth='1.500'>
    <path d='M1 2h11L6.500 11.500z' />
  </svg>
);

const Stroke = ({ d, w = 18, fill = 'none' }) => (
  <svg width={w} height='16' viewBox={`0 0 ${w} 16`} fill={fill} stroke='#000'>
    <path d={d} />
  </svg>
);

const SIDE_ICONS = {
  'Line down': <Stroke d='M3 2l12 12' />,
  'Line up': <Stroke d='M3 14L15 2' />,
  'Parallel lines': (
    <svg width='24' height='16' viewBox='0 0 24 16' stroke='#000'>
      <path d='M1 5l8 9M5 2l8 9' />
      <path d='M19 8h4l-2 2z' fill='#000' />
    </svg>
  ),
  Target: (
    <svg width='14' height='14' viewBox='0 0 14 14' fill='none' stroke='#000' strokeWidth='1.200'>
      <circle cx='8' cy='7.500' r='5' />
      <circle cx='8' cy='7.500' r='2.500' />
      <path d='M1 1l7 7M1 1l1 4M1 1l4 1M3 2v8l3 3' />
    </svg>
  ),
  Rectangle: <Stroke d='M5 4h8v8H5z' />,
  Ellipse: <Stroke d='M9 3.500a4.500 4.500 0 1 0 .1 0z' />,
  Fan: (
    <svg width='16' height='14' viewBox='0 0 16 14' fill='none' stroke='#000'>
      <path d='M1 1.500h13.500v11H1zM1 2l13 4M1 2l13 10M1 2l4 10M1 2l9 10' />
      <path d='M1 1h4L1 5z' fill='#000' />
    </svg>
  ),
  Star: <Stroke d='M9 1l1.500 5.500L16 8l-5.500 1.500L9 15l-1.500-5.500L2 8l5.500-1.500z' />,
  Pen: (
    <svg width='16' height='16' viewBox='0 0 16 16'>
      <path d='M1 1l3 1 11 10v3h-3L3 5z' fill='#0000e0' stroke='#000050' />
    </svg>
  ),
  Find: <Binoculars size={16} fill='#000' strokeWidth={2} />,
  Swap: <Stroke d='M4 2v6M5 5h9M5 5l3-2v4zM3 11h10M13 11l-3-2v4z' fill='#000' />,
  Flask: (
    <svg width='12' height='16' viewBox='0 0 12 16'>
      <path d='M3.500 1h5M4.500 1v5M7.500 1v5' stroke='#777' />
      <circle cx='6' cy='10.500' r='4' fill='#0030e0' stroke='#223' />
      <circle cx='5' cy='9.500' r='1' fill='#8cf' />
    </svg>
  ),
};

const WindowsLogo = () => (
  <svg width='24' height='24' viewBox='0 0 24 24'>
    <path d='M0 0h11v11H0zM12 0h11v11H12z' fill='#26a6ee' />
    <path d='M0 12h11v11H0zM12 12h11v11H12z' fill='#0a78d4' />
  </svg>
);

const Bing = () => (
  <svg width='20' height='20' viewBox='0 0 20 20' fill='none'>
    <path d='M1.500 10a8.500 8.500 0 1 1 8.500 8.500H2z' stroke='#1e63d8' strokeWidth='1.500' fill='#f2fbff' />
    <path d='M7.500 4v9.500' stroke='#1e63d8' strokeWidth='2.500' />
    <path d='M7.500 13.500l5-2.500q0-2-3-2.500' stroke='#1a96f0' strokeWidth='2.500' strokeLinejoin='round' />
  </svg>
);

const Chrome = () => (
  <svg width='24' height='24' viewBox='0 0 24 24'>
    <circle cx='12' cy='12' r='12' fill='#fbc116' />
    <path d='M12 12L1.600 6A12 12 0 0 1 22.400 6z' fill='#e33b2e' />
    <path d='M12 12L1.600 6A12 12 0 0 0 12 24l5-9z' fill='#219a50' />
    <circle cx='12' cy='12' r='5.500' fill='#fff' />
    <circle cx='12' cy='12' r='4.300' fill='#2a73e8' />
  </svg>
);

const Explorer = () => (
  <svg width='24' height='22' viewBox='0 0 24 22'>
    <path d='M0 2q0-2 2-2h6l3 3h11q2 0 2 2v6H0z' fill='#d99a12' />
    <path d='M0 5h24v15q0 1-1 1H1q-1 0-1-1z' fill='#ffd057' />
    <path d='M5 21v-5q0-2 2-2h10q2 0 2 2v5z' fill='#1678c8' />
    <path d='M8 18h8' stroke='#0b548f' strokeWidth='2' />
  </svg>
);

const OfficeIcon = ({ letter, color }) => (
  <svg width='23' height='24' viewBox='0 0 23 24'>
    <path d='M12 4h10v16H12z' fill='#fff' stroke={color} />
    <path d='M13 7h8M13 10h8M13 13h8M13 16h8' stroke={color} />
    {letter === 'X' && <path d='M17.500 5v14' stroke={color} />}
    <path d='M0 3l14-3v24L0 21z' fill={color} />
    <text x='7' y='16' fill='#fff' fontSize='11' fontWeight='700' textAnchor='middle'>
      {letter}
    </text>
  </svg>
);

const Zalo = () => (
  <svg width='26' height='24' viewBox='0 0 26 24'>
    <rect x='1' y='1' width='23' height='22' rx='7' fill='#fff' stroke='#1769f0' strokeWidth='1.500' />
    <path d='M3 19q8 5 19-1' stroke='#1769f0' strokeWidth='2' fill='none' />
    <text x='12' y='17' fill='#1769f0' fontSize='8' fontWeight='700' textAnchor='middle'>
      Zalo
    </text>
  </svg>
);

const DottedG = () => (
  <svg width='24' height='24' viewBox='0 0 24 24'>
    <rect width='24' height='24' fill='#373b3a' />
    <path
      d='M17 3L7 4 3 9l-1 7 3 5 11 1 2-6-8-3'
      fill='none'
      stroke='#7be000'
      strokeWidth='2.6'
      strokeDasharray='0 3.200'
      strokeLinecap='round'
    />
  </svg>
);

const AlertApp = () => (
  <svg width='24' height='24' viewBox='0 0 24 24'>
    <rect width='24' height='24' rx='4' fill='#180000' />
    <path d='M5 4q7-3 14 0l-1 8-4 3h-4l-4-3z' fill='#d80a10' />
    <path d='M8 6l6-2-4 7z' fill='#ff7a60' />
    <circle cx='12' cy='19' r='2.500' fill='#f02020' />
  </svg>
);

/* ---------- status bar ---------- */

const StatusBar = styled.footer`
  display: flex;
  align-items: center;
  height: 22px;
  flex: none;
  border-top: 1px solid #a0a0a0;
  border-bottom: 1px solid #9fb3b3;
  white-space: nowrap;
`;

const Boxed = styled.span`
  height: 19px;
  line-height: 18px;
  padding: 0 2px;
  background: ${({ $bg }) => $bg || 'none'};
  border: 1px solid #909090;
  border-right-color: #c8c8c8;
  border-bottom-color: #c8c8c8;
`;

const Tabs = styled.div`
  display: flex;
  align-items: center;
  gap: ${({ $gap }) => $gap}px;
  margin-left: ${({ $space }) => $space}px;
`;

const Tab = styled.button`
  height: 20px;
  padding-top: 2px;
  ${({ $on }) =>
    $on &&
    css`
      padding: 2px 3px 0;
      background: #fafafa;
      border-left: 1px solid #808080;
      border-top: 1px solid #808080;
    `}
`;

const SpinBox = styled.div`
  display: flex;
  flex-direction: column;
  width: 33px;

  button {
    height: 10px;
    font-size: 7px;
    line-height: 7px;
    border-right: 1px solid #808080;
    border-bottom: 1px solid #808080;
    border-left: 1px solid #fff;
  }
`;

const RightStatus = styled.div`
  display: flex;
  align-items: center;
  margin-left: auto;
  padding-right: 19px;
`;

const ZoomButton = styled.button`
  display: grid;
  place-items: center;
  width: 22px;
  color: ${ICON};
`;

const ScrollButton = styled.button`
  width: 17px;
  height: 20px;
  font-size: 9px;
  border: 1px solid #fff;
  border-right: 2px solid #808080;
  border-bottom: 1px solid #808080;
`;

const Scroll = styled.input`
  appearance: none;
  width: 108px;
  height: 20px;
  background: #f8f8f8;

  &::-webkit-slider-thumb {
    appearance: none;
    width: 16px;
    height: 20px;
    background: #f0f0f0;
    border-right: 2px solid #808080;
    border-bottom: 1px solid #808080;
  }
`;

const Spin = ({ name }) => (
  <SpinBox>
    <button aria-label={`${name} up`}>▴</button>
    <button aria-label={`${name} down`}>▾</button>
  </SpinBox>
);

/* ---------- task bar ---------- */

const TaskBar = styled.footer`
  display: grid;
  grid-template-columns: 1fr auto 1fr;
  align-items: center;
  height: 47px;
  flex: none;
  background: linear-gradient(90deg, #cddfe8, #d0e0e8 20%, #c4ebe5 34%, #c2ebe4 66%, #c9e5e6 80%, #d2dde8);
  font-family: 'Open Sans', 'Segoe UI', sans-serif;
`;

const Apps = styled.div`
  display: flex;
  align-items: center;
  grid-column: 2;
`;

const SearchBox = styled.label`
  display: flex;
  align-items: center;
  gap: 9px;
  width: 218px;
  height: 30px;
  margin: 0 3px;
  padding: 0 6px 0 11px;
  border-radius: 15px;
  border: 1px solid #bfd9d8;
  background: #f0faf9;

  input {
    flex: 1;
    min-width: 0;
    font-size: 13px;
  }
  input::placeholder {
    color: #5b6465;
  }
`;

const TaskApp = styled.button`
  position: relative;
  display: grid;
  place-items: center;
  width: 38px;
  height: 38px;
  margin: 0 3px;
  border-radius: 4px;
  background: ${({ $state }) => ($state === 'active' ? '#e2f5f2' : 'none')};

  ${({ $state }) =>
    $state &&
    css`
      &::after {
        content: '';
        position: absolute;
        bottom: 0;
        width: ${$state === 'active' ? 16 : 6}px;
        height: 3px;
        border-radius: 2px;
        background: ${$state === 'active' ? '#0a70d0' : '#748b8c'};
      }
    `}
`;

const Count = styled.span`
  position: absolute;
  top: 0;
  right: 1px;
  width: 16px;
  height: 16px;
  line-height: 16px;
  border-radius: 50%;
  background: #f00000;
  color: #fff;
  font-size: 10px;
  text-align: center;
`;

const Tray = styled.div`
  display: flex;
  align-items: center;
  justify-content: flex-end;
  padding-right: 19px;
  color: #1c2426;
`;

const Lang = styled.span`
  margin: 0 20px;
  font-size: 11px;
`;

const Quick = styled.div`
  display: flex;
  align-items: center;
  gap: 7px;
  margin-right: 17px;
`;

const Clock = styled.time`
  font-size: 12px;
  line-height: 16px;
  text-align: right;
`;

const SideGroups = ({ groups, on, left: hasLeft }) =>
  groups.map((group) => (
    <SideGroup key={group[0]} $left={hasLeft}>
      {group.map((item) => (
        <SideButton key={item} $on={on.includes(item)} aria-label={item}>
          {SIDE_ICONS[item] || item}
        </SideButton>
      ))}
    </SideGroup>
  ));

const leftGroups = [
  ['Line down', 'Line up', 'Parallel lines', 'G', 'S', 'T', 'Target', 'Rectangle', 'Ellipse', 'Fan', 'L', 'F', 'S/D', 'O'],
  ['D', 'W', 'M', 'Q', 'H', 'Y', 'C'],
  ['ORD', 'BAR', 'FAR'],
];

const rightGroups = [
  ['TBH', 'BF', 'CD', 'BT', 'SGN', 'CHN', 'EXP', 'NT', 'Star', 'Pen', 'Find', 'Swap', 'Flask', 'PRT', 'SET', 'IND'],
  ['UND', 'LKL', 'LKR', 'LKM', 'ANZ'],
  ['CMV', 'BKV'],
];

const menus = [
  'Quotes(Q)',
  'Chart(F)',
  'Material(Z)',
  'Information(G)',
  'Comprehensive(Y)',
  'Window(W)',
  'Help(H)',
];

const ohlc = [
  ['Date 20230920', GREEN],
  ['Open1211.500', GREEN],
  ['High1226.110', GREEN],
  ['Low1209.460', GREEN],
  ['Close1226.110', GREEN],
];

const icon = { size: 15, strokeWidth: 2 };

const App = () => (
  <Shell>
    <GlobalStyle />
    <TitleBar>
      <TitleText>
        <HomilyMark size={15} />
        Homily Software [Lifelong] - [Chart Analysis]
      </TitleText>
      <InfoButton aria-label='Info'>
        <svg width='14' height='14' viewBox='0 0 14 14'>
          <circle cx='7' cy='7' r='6.500' fill='#cfe3fa' stroke='#8fb0d8' />
          <path d='M7 3v2M7 6v5M5.500 11h3' stroke='#1236a0' strokeWidth='2' />
        </svg>
      </InfoButton>
      <Ticker>Index, First; Stock, Next. Long-term, First; Short-term</Ticker>
      <WindowButtons>
        <WindowButton aria-label='Minimize'>
          <Minus size={13} strokeWidth={2} />
        </WindowButton>
        <WindowButton aria-label='Restore'>
          <svg width='11' height='11' viewBox='0 0 11 11' fill='none' stroke='#000'>
            <rect x='.5' y='2.500' width='7' height='8' rx='1.500' />
            <path d='M3 .5h5.500q2 0 2 2V8' />
          </svg>
        </WindowButton>
        <WindowButton aria-label='Close'>
          <X size={16} strokeWidth={1.5} />
        </WindowButton>
      </WindowButtons>
    </TitleBar>

    <MenuBar>
      <MenuItem>
        <HomilyMark />
        Update(T)
      </MenuItem>
      {menus.map((m) => (
        <MenuItem key={m}>{m}</MenuItem>
      ))}
      <MenuItem $space={47}>
        <Globe />
        Market &amp; Language(M)
      </MenuItem>
      <MenuItem $space={60}>Homily Video(V)</MenuItem>
      <MdiButtons>
        <MdiButton aria-label='Minimize chart'>
          <svg width='9' height='9' stroke='currentColor' strokeWidth='2'>
            <path d='M1 8h6' />
          </svg>
        </MdiButton>
        <MdiButton aria-label='Restore chart'>
          <svg width='10' height='10' fill='none' stroke='currentColor'>
            <path d='M3 1.500h6v4H7M1 4.500h5v4H1zM1 5.500h5' />
          </svg>
        </MdiButton>
        <MdiButton aria-label='Close chart'>
          <svg width='9' height='9' stroke='currentColor' strokeWidth='2'>
            <path d='M1 1l6 7M7 1L1 8' />
          </svg>
        </MdiButton>
      </MdiButtons>
    </MenuBar>

    <ToolRow>
      <ToolBar>
        <Grip />
        <Tool aria-label='Home'><Home {...icon} /></Tool>
        <Divider />
        <Tool aria-label='Receive'><SatelliteDish {...icon} /></Tool>
        <Tool aria-label='Download'><DownloadIcon /></Tool>
        <Divider />
        <Tool aria-label='Vietnam'><Flag /></Tool>
        <Divider />
        <Tool aria-label='Ranking'><BarsIcon /></Tool>
        <Divider />
        <Tool aria-label='Edit'><SquarePen {...icon} /></Tool>
        <Tool aria-label='Wait'><Hourglass {...icon} /></Tool>
        <Divider />
        <Tool aria-label='Network'><Network {...icon} /></Tool>
        <Divider />
        <Tool aria-label='Back'><Rewind {...icon} /></Tool>
        <Tool aria-label='Forward'><FastForward {...icon} /></Tool>
        <Divider />
        <Tool aria-label='Exit'><PowerIcon /></Tool>
        <Divider />
        <Grip />
        <Tool aria-label='Signal'><SignalIcon /></Tool>
        <Tool aria-label='Settings'><Settings {...icon} /></Tool>
        <Tool aria-label='Frame'><FrameN /></Tool>
        <Tool aria-label='Cart' $wide>
          <ShoppingCart {...icon} />
          <svg width='7' height='5'><path d='M0 0h6L3 4z' fill='#000' /></svg>
        </Tool>
        <Tool aria-label='Folder'><Folder {...icon} /></Tool>
        <Tool aria-label='Open folder'><FolderOpen {...icon} /></Tool>
        <Tool aria-label='Screen'><Monitor {...icon} /></Tool>
        <Divider />
        <SymbolInput aria-label='Symbol' defaultValue='VNINDEX--HO CHI MINH STOCK INDEX' />
        <CodeInput aria-label='Code' />
        <Tool aria-label='Open list'><DownTriangle /></Tool>
      </ToolBar>
      <Brand viewBox='0 0 57 24'>
        <g fill='none' stroke='#111' strokeWidth='1.500'>
          <path d='M1 7l9-2M2 11l9-2M4 4v14M8 3l-1 13M11 6l8-1-3 11M12 10l8-1M14 4l-2 12M20 6l1 10M20 6h5v5h-5' />
          <path d='M27 9l3-2-1 6 2 2' strokeWidth='1' />
          <path d='M1 20l22-3' stroke='#666' strokeDasharray='2 1' />
        </g>
        <path d='M33 9l1 8M36 8v8' stroke='#e22' strokeWidth='2' />
      </Brand>
    </ToolRow>

    <Workspace>
      <Side $size={12}>
        <SideGroups groups={leftGroups} on={['Line down', 'F', 'D', 'FAR']} />
      </Side>
      <Panes>
        <Pane
          name='BBE'
          h={469}
          head={[...ohlc, ['1120.813+5', '#fff', 49]]}
          ticks={['1255.11', '1219.86', '1185.61', '1152.31', '1119.95']}
          sub={
            <>
              <SubHead>
                <span>MAG1:</span>
                <Reading $color={RED}>MA(10)1229.267</Reading>
                <Reading $color={YELLOW}>MA(50)1208.543</Reading>
                <Reading>MA(100)1150.964</Reading>
                <Reading $color={CYAN}>MA(200)1102.018</Reading>
              </SubHead>
              <SubHead>RWC:</SubHead>
            </>
          }
          overlay={
            <>
              <PeriodBadge>D</PeriodBadge>
              <RangeNote>1208-1243</RangeNote>
            </>
          }
        >
          <BbePlot />
        </Pane>
        <Pane
          name='TE'
          h={469}
          head={ohlc}
          ticks={['1243.72', '1204.27', '1166.07', '1129.08', '1093.27']}
        >
          <TePlot />
        </Pane>
        <Pane
          name='RSI'
          h={215}
          head={[
            ['RSI(14)53.348', RED],
            ['RSI(14)53.348', YELLOW],
            ['0.676+5', '#fff', 38],
          ]}
          ticks={['100.00', '75.00', '50.00', '25.00', '0.00']}
        >
          <RsiPlot />
        </Pane>
        <Pane
          name='DE'
          h={215}
          head={[['2.428', RED]]}
          ticks={['60.61', '36.36', '12.12', '-12.13', '-36.37']}
        >
          <Candles rows={deCandles} stem />
        </Pane>
        <Pane
          name='MCD'
          h={233}
          head={[
            ['FCHIPS(10)77.683(72.143)', YELLOW],
            ['PCHIPS(10)22.317(27.857)', RED],
            ['LCHIPS(10)0.000(0.000)', GREEN],
            ['0.676+5', '#fff', 22],
          ]}
          ticks={['100.00', '75.00', '50.00', '25.00', '0.00']}
        >
          <McdPlot />
        </Pane>
        <Pane
          name='KDJ'
          h={233}
          head={[
            ['K(9)37.455', RED],
            ['D42.993', YELLOW],
            ['J26.378', '#fff'],
          ]}
          ticks={['117.70', '83.85', '50.00', '16.15', '-17.70']}
        >
          <KdjPlot />
        </Pane>
      </Panes>
      <Side $size={11}>
        <SideGroups groups={rightGroups} on={['UND', 'CMV']} left />
      </Side>
    </Workspace>

    <StatusBar>
      <Boxed>[Homily]</Boxed>
      <Tabs $gap={7} $space={11}>
        <Tab>Window 1</Tab>
        <Tab>Window 2</Tab>
        <Tab>Window 3</Tab>
      </Tabs>
      <Tabs $gap={12} $space={4}>
        <Tab $on>Window 6</Tab>
        <Tab>Configuration</Tab>
        <Tabs $gap={0} $space={0}>
          <Spin name='Row' />
          <Spin name='Column' />
        </Tabs>
      </Tabs>
      <Tabs $gap={8} $space={8}>
        <Tab as='span'>Template:</Tab>
        <Tab>Fund Trend</Tab>
        <Tab>Homily Wave</Tab>
        <Tab>Double Swords</Tab>
      </Tabs>
      <RightStatus>
        <ZoomButton aria-label='Zoom in'><CirclePlus size={14} strokeWidth={1.5} /></ZoomButton>
        <ZoomButton aria-label='Zoom out'><CircleMinus size={14} strokeWidth={1.5} /></ZoomButton>
        <ScrollButton aria-label='Scroll left'>◀</ScrollButton>
        <Scroll type='range' aria-label='Scroll position' defaultValue='100' />
        <ScrollButton aria-label='Scroll right'>▶</ScrollButton>
        <Spin name='Scale' />
        <Tabs $gap={8} $space={5}>
          <Tab>Recover</Tab>
          <Tab>Save</Tab>
          <Tab>Color</Tab>
          <Tab>Display</Tab>
          <Boxed $bg='#fafafa'>RSI-RSI(14)</Boxed>
        </Tabs>
      </RightStatus>
    </StatusBar>

    <TaskBar>
      <Apps>
        <TaskApp aria-label='Start'><WindowsLogo /></TaskApp>
        <SearchBox>
          <Search size={15} strokeWidth={2} />
          <input placeholder='Search' aria-label='Search' />
          <Bing />
        </SearchBox>
        <TaskApp aria-label='Chrome' $state='open'><Chrome /></TaskApp>
        <TaskApp aria-label='Explorer'><Explorer /></TaskApp>
        <TaskApp aria-label='Zalo' $state='open'>
          <Zalo />
          <Count>5+</Count>
        </TaskApp>
        <TaskApp aria-label='Excel'><OfficeIcon letter='X' color='#1d7044' /></TaskApp>
        <TaskApp aria-label='Homily' $state='active'><HomilyMark size={25} /></TaskApp>
        <TaskApp aria-label='Garena' $state='open'><DottedG /></TaskApp>
        <TaskApp aria-label='Alerts'><AlertApp /></TaskApp>
        <TaskApp aria-label='Homily launcher'><HomilyMark size={21} color='#e00810' /></TaskApp>
        <TaskApp aria-label='Word'><OfficeIcon letter='W' color='#2a5699' /></TaskApp>
      </Apps>
      <Tray>
        <ChevronUp size={15} />
        <Lang>ENG</Lang>
        <Quick>
          <Wifi size={17} strokeWidth={1.5} />
          <Volume2 size={15} strokeWidth={1.5} />
          <svg width='17' height='11' viewBox='0 0 17 11' fill='none' stroke='currentColor'>
            <rect x='.5' y='.5' width='14' height='9' rx='2' />
            <rect x='2.500' y='2.500' width='8' height='5' fill='currentColor' />
            <path d='M16 3v4' strokeWidth='2' />
          </svg>
        </Quick>
        <Clock>
          8:47 AM
          <br />
          21/09/2023
        </Clock>
      </Tray>
    </TaskBar>
  </Shell>
);

export default App;
